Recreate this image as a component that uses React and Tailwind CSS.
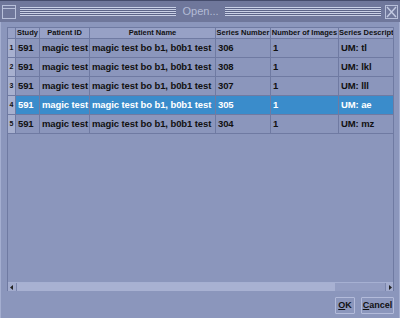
import React from 'react';

const columns = [
    { label: 'Study', w: 'w-[24px]' },
    { label: 'Patient ID', w: 'w-[50px]' },
    { label: 'Patient Name', w: 'w-[126px]' },
    { label: 'Series Number', w: 'w-[55px]' },
    { label: 'Number of Images', w: 'w-[68px]' },
    { label: 'Series Description', w: 'w-[55px]' },
];

const rows = [
    ['591', 'magic test', 'magic test bo b1, b0b1 test', '306', '1', 'UM: tl'],
    ['591', 'magic test', 'magic test bo b1, b0b1 test', '308', '1', 'UM: lkl'],
    ['591', 'magic test', 'magic test bo b1, b0b1 test', '307', '1', 'UM: lll'],
    ['591', 'magic test', 'magic test bo b1, b0b1 test', '305', '1', 'UM: ae'],
    ['591', 'magic test', 'magic test bo b1, b0b1 test', '304', '1', 'UM: mz'],
];

const selectedRow = 3;

const TitleLines = ({ className }) => (
    <div className={`h-[9px] ${className}`}
        style={{ backgroundImage: 'repeating-linear-gradient(to bottom, #c9d0e6 0px, #c9d0e6 1px, #5c6488 1px, #5c6488 2px)' }}
    />
);

const App = () => {
    return (
        <div className="w-[400px] h-[318px] bg-[#8b96bc] flex flex-col font-['Liberation_Sans',Arial,sans-serif] overflow-hidden">
            {/* Title bar */}
            <div className="h-[22px] bg-[#6f779b] border-t border-[#454c6c] flex items-center px-[2px] gap-[4px]">
                <div className="w-[14px] h-[14px] border border-[#b8c0da] flex flex-col">
                    <div className="h-[3px] border-b border-[#b8c0da]" />
                </div>
                <TitleLines className="flex-1" />
                <span className="text-[11px] text-[#b4bcd6] px-[2px] leading-none">Open...</span>
                <TitleLines className="flex-1" />
                <div className="w-[13px] h-[14px] border border-[#b8c0da] flex items-center justify-center">
                    <svg width="11" height="12" viewBox="0 0 11 12">
                        <path d="M1 1 L10 11 M10 1 L1 11" stroke="#c3cae2" strokeWidth="1.4" />
                    </svg>
                </div>
            </div>

            {/* Body */}
            <div className="flex-1 flex border-l border-r border-[#a4aed0]">
                <div className="flex-1 flex flex-col pl-[6px] pt-[5px]">
                    {/* Table */}
                    <div className="w-[387px] h-[264px] border-l border-t border-r border-[#6f7aa2] flex flex-col">
                        <div className="flex h-[11px] bg-[#97a1c6] border-b border-[#6f7aa2]">
                            <div className="w-[8px] shrink-0 border-r border-[#6f7aa2]" />
                            {columns.map((c) => (
                                <div key={c.label} className={`${c.w} shrink-0 border-r border-[#6f7aa2] overflow-hidden whitespace-nowrap text-center text-[7.5px] font-bold leading-[10px] text-[#111]`}>
                                    {c.label}
                                </div>
                            ))}
                        </div>
                        {rows.map((r, i) => {
                            const sel = i === selectedRow;
                            return (
                                <div key={i} className={`flex h-[19px] border-b border-[#6f7aa2] ${sel ? 'bg-[#3a8ccb]' : ''}`}>
                                    <div className="w-[8px] shrink-0 bg-[#a7b0cf] border-r border-[#6f7aa2] text-[7px] font-bold text-[#111] flex items-center justify-center">
                                        {i + 1}
                                    </div>
                                    {r.map((cell, j) => (
                                        <div key={j} className={`${columns[j].w} shrink-0 border-r border-[#6f7aa2] overflow-hidden whitespace-nowrap pl-[2px] text-[9.5px] tracking-[-0.1px] font-bold flex items-center ${sel ? 'text-white' : 'text-[#111]'}`}>
                                            {cell}
                                        </div>
                                    ))}
                                </div>
                            );
                        })}
                        <div className="flex-1" />
                        {/* Horizontal scrollbar */}
                        <div className="h-[9px] flex border-t border-[#a6b0d2]">
                            <div className="w-[9px] bg-[#a3acce] border-r border-[#7b86ad] flex items-center justify-center">
                                <svg width="4" height="5" viewBox="0 0 4 5"><path d="M3 0 L0 2.5 L3 5 Z" fill="#222" /></svg>
                            </div>
                            <div className="flex-1 bg-[#a8b1d2]" />
                            <div className="w-[50px] bg-[#939dc2]" />
                            <div className="w-[8px] bg-[#a3acce] border-l border-[#7b86ad] flex items-center justify-center">
                                <svg width="4" height="5" viewBox="0 0 4 5"><path d="M1 0 L4 2.5 L1 5 Z" fill="#222" /></svg>
                            </div>
                        </div>
                    </div>

                    {/* Buttons */}
                    <div className="flex justify-end gap-[6px] mt-[6px] pr-[5px]">
                        <button className="w-[20px] h-[17px] border border-[#b3bbda] rounded-[1px] text-[9px] font-bold text-[#111] leading-none">
                            <span className="underline">O</span>K
                        </button>
                        <button className="w-[33px] h-[17px] border border-[#b3bbda] rounded-[1px] text-[9px] font-bold text-[#111] leading-none">
                            <span className="underline">C</span>ancel
                        </button>
                    </div>
                </div>
            </div>
        </div>
    );
};

export default App;
